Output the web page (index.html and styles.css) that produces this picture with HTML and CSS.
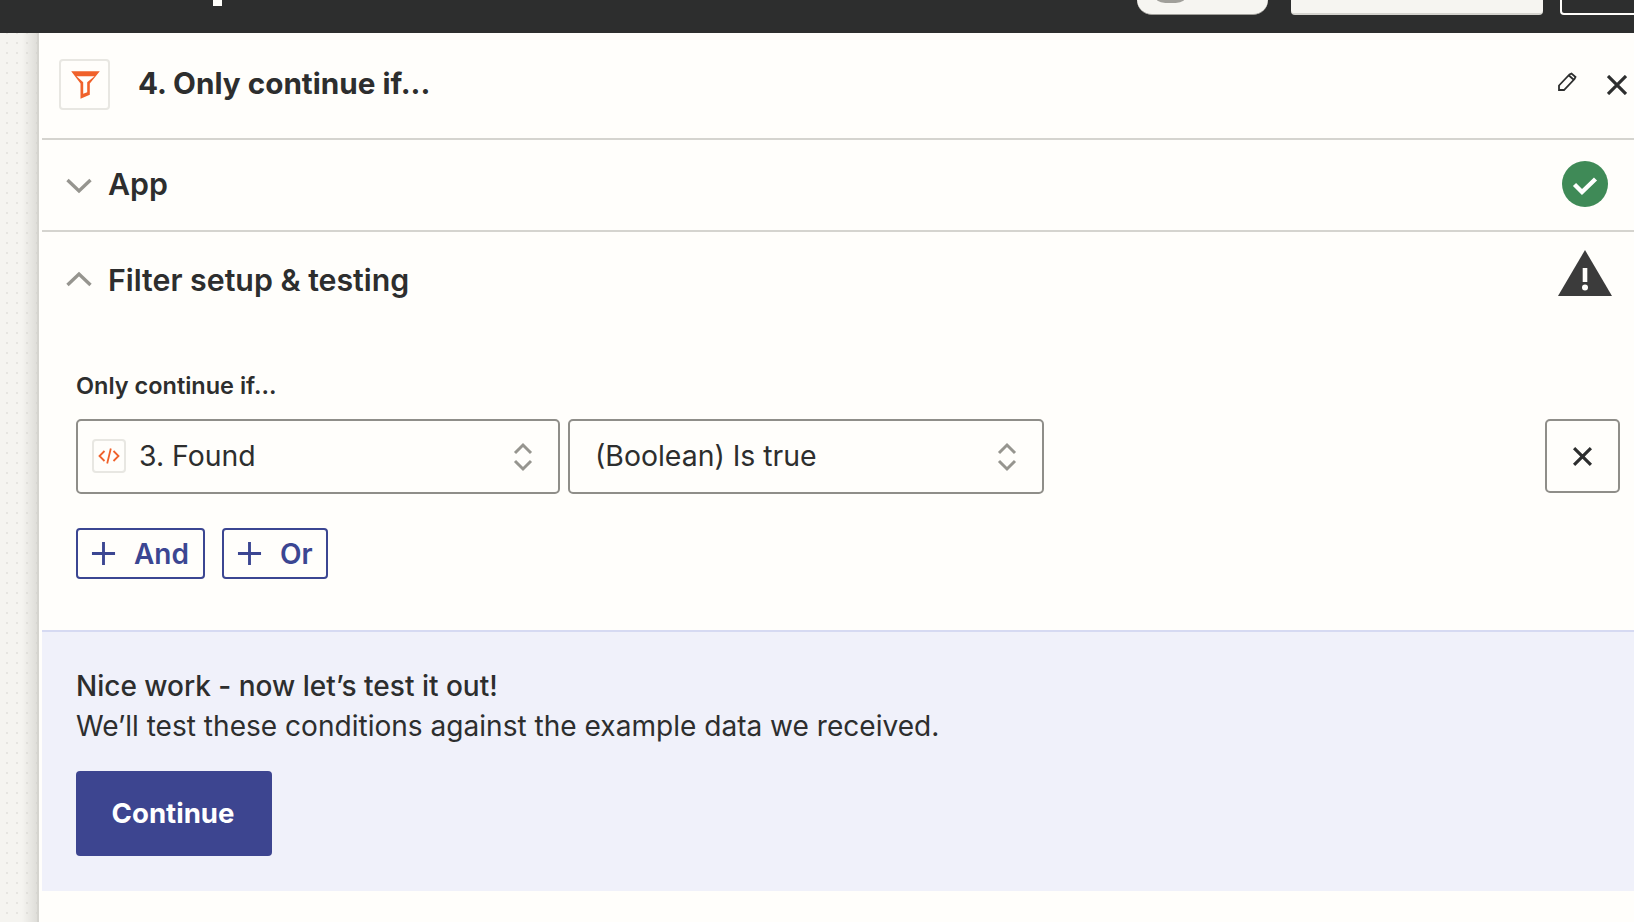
FILE: index.html
```html
<!DOCTYPE html>
<html lang="en">
<head>
<meta charset="utf-8">
<title>Only continue if</title>
<link rel="stylesheet" href="styles.css">
</head>
<body>
<header class="topbar">
  <span class="top-mark"></span>
  <span class="top-pill"><span class="top-pill-knob"></span></span>
  <span class="top-btn"></span>
  <span class="top-outline"></span>
</header>
<div class="main">
  <aside class="rail"></aside>
  <section class="panel">
    <div class="step-head">
      <span class="app-icon">
        <svg width="30" height="30" viewBox="0 0 30 30"><path class="funnel" fill-rule="evenodd" d="M1.200 2.200H29.800L19.800 14.500V25.800L10.500 29.800V14.500ZM6.500 7.200L13.200 13.200V24.800L17.200 23.200V13.200L24.500 7.200Z"/></svg>
      </span>
      <h1 class="step-title">4. Only continue if...</h1>
      <svg class="pencil" width="20" height="20" viewBox="0 0 20 20"><path d="M2 13.500L12.500 2.500L14.500 1.500L18.500 5L17.500 7L7 18H2ZM12 3.500L17 8" fill="none" stroke="#2d2e2e" stroke-width="1.800"/></svg>
      <svg class="close" width="20" height="20" viewBox="0 0 20 20"><path d="M1 1L19 19M19 1L1 19" stroke="#2d2e2e" stroke-width="3.200"/></svg>
    </div>
    <div class="row row-app">
      <svg class="chev" width="26" height="16" viewBox="0 0 26 16"><path d="M1.500 2L13 13L24.500 2" fill="none" stroke="#96958f" stroke-width="3.400"/></svg>
      <h2 class="row-title">App</h2>
      <svg class="status" width="46" height="46" viewBox="0 0 46 46"><circle cx="23" cy="23" r="23" fill="#3f8a57"/><path d="M12.500 23.500L20 31L33.500 18" fill="none" stroke="#fff" stroke-width="4.400"/></svg>
    </div>
    <div class="row row-filter">
      <svg class="chev" width="26" height="16" viewBox="0 0 26 16"><path d="M1.500 14L13 3L24.500 14" fill="none" stroke="#96958f" stroke-width="3.400"/></svg>
      <h2 class="row-title">Filter setup &amp; testing</h2>
      <svg class="warn" width="54" height="46" viewBox="0 0 54 46"><path d="M27 0L54 46H0Z" fill="#3b3b3b"/><rect x="24.700" y="18" width="4.600" height="14" fill="#fffefb"/><circle cx="27" cy="37.500" r="3" fill="#fffefb"/></svg>
    </div>
    <div class="filter-body">
      <label class="field-label">Only continue if...</label>
      <div class="cond">
        <div class="select select-a">
          <span class="mini-icon">
            <svg width="22" height="20" viewBox="0 0 22 20"><path d="M6.500 5L1.500 10L6.500 15M15.500 5L20.500 10L15.500 15M12.800 2.500L9.200 17.500" fill="none" stroke="#f0612a" stroke-width="1.800"/></svg>
          </span>
          <span class="select-text">3. Found</span>
          <svg class="updown" width="20" height="30" viewBox="0 0 20 30"><path d="M2 11L10 3L18 11M2 19L10 27L18 19" fill="none" stroke="#96958f" stroke-width="3"/></svg>
        </div>
        <div class="select select-b">
          <span class="select-text">(Boolean) Is true</span>
          <svg class="updown" width="20" height="30" viewBox="0 0 20 30"><path d="M2 11L10 3L18 11M2 19L10 27L18 19" fill="none" stroke="#96958f" stroke-width="3"/></svg>
        </div>
        <button class="del">
          <svg width="21" height="21" viewBox="0 0 20 20"><path d="M2 2L18 18M18 2L2 18" stroke="#2d2e2e" stroke-width="3"/></svg>
        </button>
      </div>
      <div class="adders">
        <button class="add add-and">
          <svg width="25" height="25" viewBox="0 0 26 26"><path d="M13 1V25M1 13H25" stroke="#3b4692" stroke-width="3"/></svg>
          And
        </button>
        <button class="add add-or">
          <svg width="25" height="25" viewBox="0 0 26 26"><path d="M13 1V25M1 13H25" stroke="#3b4692" stroke-width="3"/></svg>
          Or
        </button>
      </div>
    </div>
    <div class="test-box">
      <p class="test-lead">Nice work - now let’s test it out!</p>
      <p class="test-sub">We’ll test these conditions against the example data we received.</p>
      <button class="continue">Continue</button>
    </div>
  </section>
</div>
</body>
</html>
```

FILE: styles.css
```css
* { box-sizing: border-box; }
html, body { margin: 0; height: 100%; }
body {
  width: 1634px;
  height: 922px;
  overflow: hidden;
  display: flex;
  flex-direction: column;
  font-family: Inter, "Liberation Sans", sans-serif;
  color: #2d2e2e;
  background: #fffefb;
}
h1, h2, p { margin: 0; }
button { font-family: inherit; cursor: pointer; padding: 0; }

.topbar {
  height: 33px;
  flex: none;
  display: flex;
  align-items: flex-start;
  background: #2d2e2e;
  padding-left: 213px;
  overflow: hidden;
}
.top-mark { width: 9px; height: 6px; flex: none; background: #fffefb; }
.top-pill {
  width: 131px;
  height: 15px;
  flex: none;
  margin-left: 915px;
  margin-right: 23px;
  background: #f6f5f1;
  border-bottom: 1px solid #a09f9a;
  border-radius: 0 0 30px 30px;
  display: flex;
  justify-content: center;
}
.top-pill-knob {
  width: 27px;
  height: 3px;
  background: #a09f9a;
  border-radius: 0 0 14px 14px / 0 0 3px 3px;
  margin-right: 64px;
}
.top-btn {
  width: 252px;
  height: 15px;
  flex: none;
  background: #f6f5f1;
  border-bottom: 2px solid #d5d4cf;
  border-radius: 0 0 4px 4px;
}
.top-outline {
  width: 90px;
  height: 15px;
  flex: none;
  margin-left: 17px;
  border: 2px solid #fffefb;
  border-top: 0;
  border-radius: 0 0 4px 4px;
}

.main { flex: 1; display: flex; min-height: 0; }
.rail {
  width: 39px;
  flex: none;
  border-right: 2px solid #d5d4cf;
  background-color: #f5f4f0;
  background-image:
    linear-gradient(90deg, rgba(200,199,194,0) 22px, rgba(200,199,194,.5) 37px),
    radial-gradient(circle, #d3d2cd 0.6px, transparent 0.8px);
  background-size: auto, 10px 10px;
  background-position: 0 0, 2px 5px;
}
.panel {
  flex: 1;
  min-width: 0;
  padding-left: 3px;
  background: #fffefb;
  display: flex;
  flex-direction: column;
}

.step-head {
  height: 107px;
  flex: none;
  display: flex;
  align-items: center;
  padding: 0 7px 0 17px;
  border-bottom: 2px solid #d5d4cf;
}
.app-icon {
  width: 51px;
  height: 51px;
  flex: none;
  border: 2px solid #e8e7e2;
  border-radius: 4px;
  display: flex;
  align-items: center;
  justify-content: center;
  margin-top: -3px;
}
.funnel { fill: #f0612a; }
.step-title {
  font-size: 29.7px;
  font-weight: 700;
  margin: -5px 0 0 28px;
  flex: 1;
}
.pencil { margin: -7px 0 0 0; flex: none; }
.close { margin: -2px 0 0 30px; flex: none; }

.row { display: flex; flex: none; padding-left: 24px; padding-right: 26px; }
.row-app { height: 92px; align-items: center; border-bottom: 2px solid #d5d4cf; }
.row-filter { height: 87px; padding-top: 20px; align-items: flex-start; }
.row-title { font-size: 30.3px; font-weight: 600; margin-left: 16px; flex: 1; }
.row-app .chev { margin-top: 2px; }
.row-app .row-title { margin-top: -3px; }
.row-app .status { margin-top: -3px; }
.row-filter .chev { margin-top: 19px; }
.row-filter .row-title { margin-top: 8px; line-height: 40px; }
.warn { margin-top: -2px; margin-right: -4px; }

.filter-body {
  flex: none;
  height: 311px;
  padding: 51px 14px 0 34px;
}
.field-label { display: block; font-size: 23.5px; font-weight: 600; line-height: 32px; }
.cond { display: flex; margin-top: 17px; }
.select {
  height: 75px;
  flex: none;
  display: flex;
  align-items: center;
  background: #fffefb;
  border: 2px solid #8f8e89;
  border-radius: 5px;
}
.select-a { width: 484px; padding: 0 25px 0 14px; }
.select-b { width: 476px; margin-left: 8px; padding: 0 25px 0 25px; }
.select-text { font-size: 28.4px; flex: 1; margin-top: -2px; }
.mini-icon {
  width: 34px;
  height: 34px;
  flex: none;
  border: 2px solid #e8e7e2;
  border-radius: 4px;
  display: flex;
  align-items: center;
  justify-content: center;
  margin-right: 13px;
  margin-top: -1px;
}
.updown { flex: none; }
.del {
  width: 75px;
  height: 74px;
  margin-left: auto;
  background: #fffefb;
  border: 2px solid #8f8e89;
  border-radius: 5px;
  display: flex;
  align-items: center;
  justify-content: center;
}
.adders { display: flex; gap: 17px; margin-top: 34px; }
.add {
  height: 51px;
  display: flex;
  align-items: center;
  gap: 18px;
  padding: 0 14px 0 13px;
  background: #fffefb;
  border: 2px solid #3b4692;
  border-radius: 4px;
  color: #3b4692;
  font-size: 28px;
  font-weight: 600;
}
.add-or { padding-right: 13px; }

.test-box {
  height: 261px;
  flex: none;
  background: #f0f1fa;
  border-top: 2px solid #d6daf2;
  padding: 34px 34px 0;
}
.test-lead { font-size: 28px; font-weight: 500; line-height: 40px; }
.test-sub { font-size: 28.07px; line-height: 40px; }
.continue {
  display: block;
  width: 196px;
  height: 85px;
  margin-top: 25px;
  padding: 0 2px 2px 0;
  border: 0;
  border-radius: 4px;
  background: #3d4590;
  color: #fff;
  font-size: 27.6px;
  font-weight: 700;
}
```
